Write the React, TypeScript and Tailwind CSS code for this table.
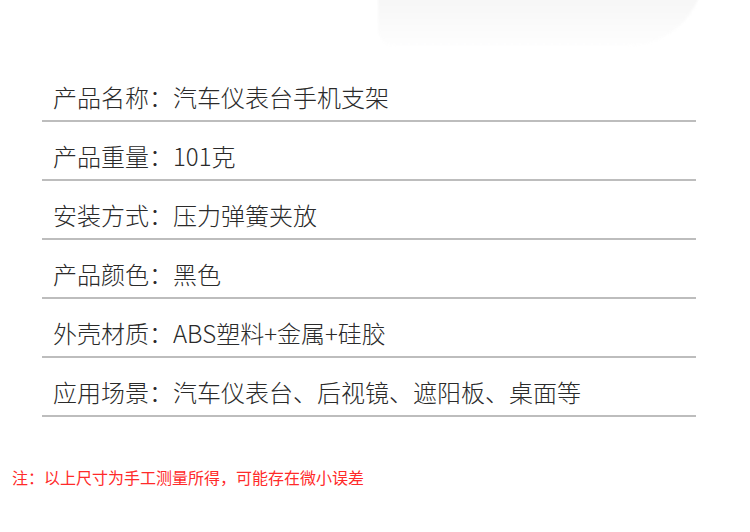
import React from 'react';

const specs: [string, string][] = [
  ['产品名称', '汽车仪表台手机支架'],
  ['产品重量', '101克'],
  ['安装方式', '压力弹簧夹放'],
  ['产品颜色', '黑色'],
  ['外壳材质', 'ABS塑料+金属+硅胶'],
  ['应用场景', '汽车仪表台、后视镜、遮阳板、桌面等'],
];

const App: React.FC = () => {
  return (
    <div className="relative w-[750px] h-[532px] bg-white overflow-hidden font-['Noto_Sans_CJK_SC','Noto_Sans',sans-serif]">
      {/* faint shadow left over from the product shot above */}
      <div className="absolute left-[378px] top-[-30px] w-[326px] h-[76px] rounded-bl-[30px] rounded-br-[140px] bg-gradient-to-b from-[#f2f2f2] via-[#f8f8f8] to-[#fefefe] blur-[1px]"></div>

      <div className="relative mt-[63px] ml-[42px] w-[654px]">
        {specs.map(([label, value]) => (
          <div key={label} className="pt-[22px] pb-[11px] border-b-2 border-[#bdbdbd]">
            <p className="pl-[11px] text-[24px] leading-[24px] text-[#2a2a2a] font-light whitespace-nowrap">
              {label}：{value}
            </p>
          </div>
        ))}
      </div>

      <p className="relative mt-[50px] pl-[12px] text-[16px] leading-[20px] text-[#ff2a2a]">
        注：以上尺寸为手工测量所得，可能存在微小误差
      </p>
    </div>
  );
};

export default App;
